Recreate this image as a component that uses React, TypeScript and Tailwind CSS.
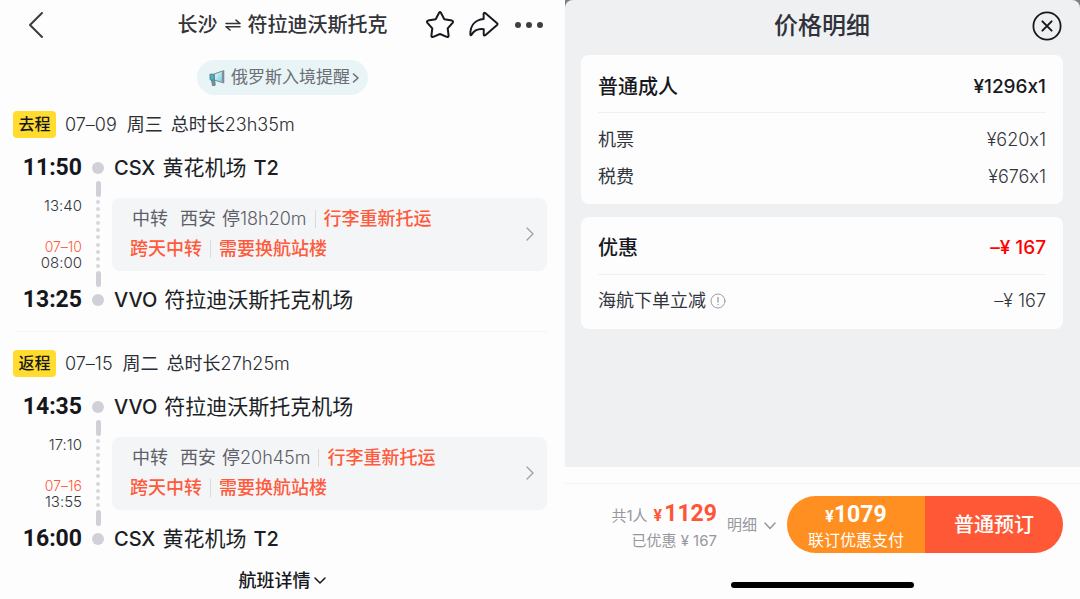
import React from 'react';

const FONT = 'font-[Inter,"Noto_Sans_CJK_SC",sans-serif] [font-variant-ligatures:no-contextual]';
const FONT_NUM = 'font-[Roboto,"Noto_Sans_CJK_SC",sans-serif]';

interface Leg {
  tag: string;
  date: string;
  weekday: string;
  duration: string;
  depTime: string;
  depAirport: string;
  depTerminal?: string;
  depCode: string;
  arrTime: string;
  arrCode: string;
  arrAirport: string;
  arrTerminal?: string;
  stopArrive: string;
  stopDate: string;
  stopLeave: string;
  stopCity: string;
  stopLength: string;
}

const LEGS: Leg[] = [
  {
    tag: '去程',
    date: '07–09',
    weekday: '周三',
    duration: '23h35m',
    depTime: '11:50',
    depCode: 'CSX',
    depAirport: '黄花机场',
    depTerminal: 'T2',
    arrTime: '13:25',
    arrCode: 'VVO',
    arrAirport: '符拉迪沃斯托克机场',
    stopArrive: '13:40',
    stopDate: '07–10',
    stopLeave: '08:00',
    stopCity: '西安',
    stopLength: '18h20m',
  },
  {
    tag: '返程',
    date: '07–15',
    weekday: '周二',
    duration: '27h25m',
    depTime: '14:35',
    depCode: 'VVO',
    depAirport: '符拉迪沃斯托克机场',
    arrTime: '16:00',
    arrCode: 'CSX',
    arrAirport: '黄花机场',
    arrTerminal: 'T2',
    stopArrive: '17:10',
    stopDate: '07–16',
    stopLeave: '13:55',
    stopCity: '西安',
    stopLength: '20h45m',
  },
];

interface ChevronProps {
  className?: string;
  d: string;
  box: string;
  width?: number;
}

const Chevron: React.FC<ChevronProps> = ({ className, d, box, width = 1.5 }) => (
  <svg viewBox={box} className={className} fill="none" stroke="currentColor" strokeWidth={width} strokeLinecap="round" strokeLinejoin="round" aria-hidden="true">
    <path d={d} />
  </svg>
);

const MegaphoneIcon = () => (
  <svg viewBox="0 0 18 18" className="w-[18px] h-[18px]" aria-hidden="true">
    <defs>
      <linearGradient id="horn" x1="0" y1="0" x2="1" y2="1">
        <stop offset="0" stopColor="#eefbfd" />
        <stop offset="1" stopColor="#6fcfe0" />
      </linearGradient>
    </defs>
    <path d="M3.4 10.5 L4.6 16.6 L7.2 16.2 L6.6 10.5 Z" fill="#5f9fae" stroke="#5f7780" strokeWidth="0.9" strokeLinejoin="round" />
    <path d="M6.2 5 L14.4 2 L14.4 13.6 L6.2 11 Z" fill="url(#horn)" stroke="#7d8a90" strokeWidth="1" strokeLinejoin="round" />
    <path d="M2 5.2 H6.2 V11 H2.8 Q2 11 2 10.2 Z" fill="#48b4c9" stroke="#5f7780" strokeWidth="0.9" strokeLinejoin="round" />
    <path d="M15.6 1.8 V13.8" stroke="#7d8a90" strokeWidth="1.4" strokeLinecap="round" />
  </svg>
);

const Rail = () => (
  <div className="flex flex-col items-center justify-between py-[9px]" aria-hidden="true">
    <span className="w-3 h-3 rounded-full bg-[#d0d1d8]" />
    <span className="w-[5px] h-4 mt-1 rounded-full bg-[#d0d1d8]" />
    {Array.from({ length: 10 }, (_, i) => (
      <span key={i} className="w-1 h-1 rounded-full bg-[#d6d7dc]" />
    ))}
    <span className="w-[5px] h-4 mb-1 rounded-full bg-[#d0d1d8]" />
    <span className="w-3 h-3 rounded-full bg-[#d0d1d8]" />
  </div>
);

const Airport: React.FC<{ code: string; name: string; terminal?: string }> = ({ code, name, terminal }) => (
  <div className="h-[30px] pl-0.5 flex items-center gap-[7px] text-[21px] leading-[30px] text-[#1c1f26] whitespace-nowrap">
    <span className="text-xl leading-[30px] font-medium">{code}</span>
    <span>{name}</span>
    {terminal && <span className="text-xl leading-[30px] font-medium">{terminal}</span>}
  </div>
);

const LegView: React.FC<{ leg: Leg }> = ({ leg }) => (
  <section>
    <h2 className="flex items-center pl-[13px] h-[27px] text-lg leading-[27px] text-[#2b2d34] whitespace-nowrap">
      <span className="w-[43px] rounded bg-[#ffdc2e] text-center text-base leading-[27px] font-medium text-[#15171c]">{leg.tag}</span>
      <span className="ml-[9px] font-light">{leg.date}</span>
      <span className="ml-2.5">{leg.weekday}</span>
      <span className="ml-2">总时长</span>
      <span className="font-light">{leg.duration}</span>
    </h2>

    <div className="mt-[15px] grid grid-cols-[84px_28px_1fr]">
      <div className="pr-0.5 text-right text-[15px] text-[#33353c]">
        <div className={`text-[23px] leading-[30px] font-bold text-[#15171c] ${FONT_NUM}`}>{leg.depTime}</div>
        <div className="mt-[15px] mb-3.5 h-[73px] flex flex-col leading-4 font-light">
          <span>{leg.stopArrive}</span>
          <span className="mt-auto text-sm leading-4 text-[#ff5a3c]">{leg.stopDate}</span>
          <span>{leg.stopLeave}</span>
        </div>
        <div className={`text-[23px] leading-[30px] font-bold text-[#15171c] ${FONT_NUM}`}>{leg.arrTime}</div>
      </div>

      <Rail />

      <div className="pr-[18px]">
        <Airport code={leg.depCode} name={leg.depAirport} terminal={leg.depTerminal} />
        <button type="button" className="mt-[15px] mb-3.5 w-full h-[73px] pl-[18px] pr-3 pb-0.5 flex items-center justify-between rounded-lg bg-[#f4f5f7] text-left text-lg leading-[30px] whitespace-nowrap">
          <span className="flex flex-col">
            <span className="flex items-center pl-0.5 text-[#5d5f68]">
              <span>中转</span>
              <span className="ml-3">{leg.stopCity}</span>
              <span className="ml-1.5">停</span>
              <span className="font-light">{leg.stopLength}</span>
              <span className="mx-2 w-px h-[18px] bg-[#d9dade]" />
              <span className="font-medium text-[#ff5a3c]">行李重新托运</span>
            </span>
            <span className="flex items-center font-medium text-[#ff5a3c]">
              <span>跨天中转</span>
              <span className="mx-2 w-px h-[18px] bg-[#d9dade]" />
              <span>需要换航站楼</span>
            </span>
          </span>
          <Chevron className="w-[10px] h-4 text-[#9a9ca3]" box="0 0 10 16" d="M2 2 L8 8 L2 14" width={1.2} />
        </button>
        <Airport code={leg.arrCode} name={leg.arrAirport} terminal={leg.arrTerminal} />
      </div>
    </div>
  </section>
);

const FlightPanel = () => (
  <main className="bg-[#fdfdfd]">
    <header className="h-[50px] px-[22px] grid grid-cols-[1fr_auto_1fr] items-center text-[#17191f]">
      <button type="button" aria-label="返回" className="ml-1.5 justify-self-start">
        <Chevron className="w-4 h-7 text-[#3a3c40]" box="0 0 16 28" d="M14 2 L2 14 L14 26" width={2} />
      </button>
      <h1 className="flex items-center text-xl leading-[30px] font-medium text-[#333438] whitespace-nowrap">
        长沙
        <svg viewBox="0 0 16 12" className="mx-[7px] w-4 h-3" fill="none" stroke="currentColor" strokeWidth="1.6" strokeLinecap="round" strokeLinejoin="round" aria-label="往返">
          <path d="M1 4.5 H15 L11 1.2 M15 7.7 H1 L5 11" />
        </svg>
        符拉迪沃斯托克
      </h1>
      <div className="flex items-center justify-self-end">
        <button type="button" aria-label="收藏">
          <svg viewBox="0 0 30 30" className="w-[30px] h-[30px]" fill="none" stroke="currentColor" strokeWidth="2" strokeLinejoin="round">
            <path d="M14.1 2.8 Q15 1.4 15.9 2.8 L19.3 9.2 L26.9 10.6 Q28.8 11.2 27.6 12.8 L22.7 18.4 L23.6 25.6 Q23.5 27.4 21.8 26.8 L15 24 L8.2 26.8 Q6.5 27.4 6.4 25.6 L7.3 18.4 L2.4 12.8 Q1.2 11.2 3.1 10.6 L10.7 9.2 Z" />
          </svg>
        </button>
        <button type="button" aria-label="分享" className="ml-3.5">
          <svg viewBox="0 0 32 30" className="w-[30px] h-7" fill="none" stroke="currentColor" strokeWidth="2.1" strokeLinejoin="round" strokeLinecap="round">
            <path d="M15.6 2.8 Q16 1.4 17.3 2.2 L30 13 Q31 14 30 15 L17.4 26 Q16 26.8 15.7 25.4 L15.7 19.4 C9.6 18.8 5.2 20.8 2.7 25.4 Q1.6 27 1.4 25 C1.2 16 6 9.6 15.6 8.6 Z" />
          </svg>
        </button>
        <button type="button" aria-label="更多" className="ml-4 flex gap-[5px] text-[#3e3f43]">
          <span className="w-1.5 h-1.5 rounded-full bg-current" />
          <span className="w-1.5 h-1.5 rounded-full bg-current" />
          <span className="w-1.5 h-1.5 rounded-full bg-current" />
        </button>
      </div>
    </header>

    <a href="#notice" className="mt-2.5 mx-auto w-fit h-[35px] pl-[11px] pr-2 flex items-center rounded-full bg-[#e8f4f6] text-[17px] leading-[35px] text-[#6b6e75] whitespace-nowrap">
      <MegaphoneIcon />
      <span className="ml-[5px]">俄罗斯入境提醒</span>
      <Chevron className="ml-0.5 w-2 h-3" box="0 0 8 12" d="M1.5 2 L6 6 L1.5 10" width={1.6} />
    </a>

    <div className="mt-4">
      <LegView leg={LEGS[0]} />
      <hr className="mt-4 mb-[18px] ml-[17px] mr-[18px] border-[#f5f5f6]" />
      <LegView leg={LEGS[1]} />
    </div>

    <button type="button" className="mt-3 mx-auto flex items-center text-lg leading-[30px] font-medium text-[#15171c]">
      航班详情
      <Chevron className="ml-0.5 w-3.5 h-2.5" box="0 0 14 10" d="M2 2 L7 7 L12 2" />
    </button>
  </main>
);

interface PriceRowProps {
  label: string;
  value: string;
  hint?: boolean;
}

const PriceRow: React.FC<PriceRowProps> = ({ label, value, hint }) => (
  <div className="flex items-center justify-between text-lg leading-[37px] text-[#33353d]">
    <span className="flex items-center">
      {label}
      {hint && (
        <svg viewBox="0 0 16 16" className="ml-1 w-4 h-4" fill="none" stroke="#9b9da3" strokeLinecap="round" aria-hidden="true">
          <circle cx="8" cy="8" r="7" />
          <path d="M8 4.3 V9 M8 11.3 V11.6" strokeWidth="1.3" />
        </svg>
      )}
    </span>
    <span className="font-light">{value}</span>
  </div>
);

const PricePanel = () => (
  <aside className="flex flex-col bg-[#808080]">
    <div className="grow pl-4 pr-[17px] rounded-t-lg bg-[#eef0f2]">
      <header className="h-[55px] pb-1 grid grid-cols-[1fr_auto_1fr] items-center">
        <h2 className="col-start-2 text-2xl leading-9 font-medium text-[#30323b]">价格明细</h2>
        <button type="button" aria-label="关闭" className="justify-self-end mr-px text-[#17191f]">
          <svg viewBox="0 0 30 30" className="w-[30px] h-[30px]" fill="none" stroke="currentColor" strokeWidth="1.8" strokeLinecap="round">
            <circle cx="15" cy="15" r="13.6" />
            <path d="M10.4 10.4 L19.6 19.6 M19.6 10.4 L10.4 19.6" strokeWidth="2" />
          </svg>
        </button>
      </header>

      <section className="px-[17px] pt-[13px] pb-[9px] rounded-lg bg-[#fdfdfd]">
        <h3 className="flex justify-between pb-1.5 text-xl leading-[38px] font-medium text-[#17191f]">
          <span>普通成人</span>
          <span className="text-[19px] leading-[38px]">¥1296x1</span>
        </h3>
        <div className="pt-2 border-t border-[#f1f1f3]">
          <PriceRow label="机票" value="¥620x1" />
          <PriceRow label="税费" value="¥676x1" />
        </div>
      </section>

      <section className="mt-[13px] px-[17px] pt-3 pb-2.5 rounded-lg bg-[#fdfdfd]">
        <h3 className="flex justify-between pb-[7px] text-xl leading-[38px] font-medium text-[#17191f]">
          <span>优惠</span>
          <span className="text-[19px] leading-[38px] text-[#ff0000]">–¥ 167</span>
        </h3>
        <div className="pt-[7px] border-t border-[#f1f1f3]">
          <PriceRow label="海航下单立减" value="–¥ 167" hint />
        </div>
      </section>
    </div>

    <footer className="pt-4 bg-[#fdfdfd]">
      <div className="pt-3 pr-[17px] flex items-center justify-end border-t border-[#f3f3f5] whitespace-nowrap text-[15px] text-[#96989f]">
        <div className="pt-[3px] text-right">
          <div className="h-[30px] flex items-baseline justify-end leading-[30px]">
            <span>共1人</span>
            <strong className={`ml-1.5 mr-0.5 text-base leading-[30px] text-[#ff5436] ${FONT_NUM}`}>¥</strong>
            <strong className={`text-[23px] leading-[30px] text-[#ff5436] ${FONT_NUM}`}>1129</strong>
          </div>
          <div className="leading-6">已优惠 ¥ 167</div>
        </div>
        <button type="button" className="ml-2.5 pt-0.5 flex items-center">
          明细
          <Chevron className="ml-1.5 w-3.5 h-2.5" box="0 0 14 10" d="M2 2 L7 7.5 L12 2" />
        </button>
        <div className="ml-2.5 w-[276px] h-[57px] grid grid-cols-2 rounded-full overflow-hidden text-white">
          <button type="button" className="pt-1 flex flex-col items-center justify-start bg-[#ff8f20] text-base">
            <span className={`h-[30px] font-bold leading-[30px] ${FONT_NUM}`}>
              ¥<span className="text-[23px] leading-[30px]">1079</span>
            </span>
            <span className="leading-5">联订优惠支付</span>
          </button>
          <button type="button" className="bg-[#ff5837] text-xl font-medium">普通预订</button>
        </div>
      </div>
      <div className="mt-[29px] mb-[11px] mx-auto w-[183px] h-1.5 rounded-full bg-black" />
    </footer>
  </aside>
);

const App = () => (
  <div className={`min-h-screen grid grid-cols-[565fr_515fr] ${FONT}`}>
    <FlightPanel />
    <PricePanel />
  </div>
);

export default App;
